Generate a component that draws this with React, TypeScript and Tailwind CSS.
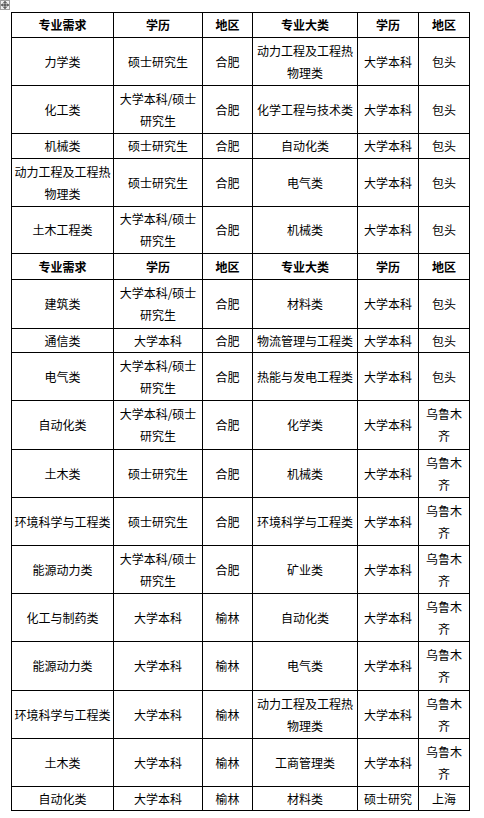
const header = ["专业需求", "学历", "地区", "专业大类", "学历", "地区"];

type Row = { h: number; cells: string[] };

const BS = "大学本科/硕士\n研究生";
const WLMQ = "乌鲁木\n齐";

const top: Row[] = [
  { h: 48, cells: ["力学类", "硕士研究生", "合肥", "动力工程及工程热\n物理类", "大学本科", "包头"] },
  { h: 48, cells: ["化工类", BS, "合肥", "化学工程与技术类", "大学本科", "包头"] },
  { h: 25, cells: ["机械类", "硕士研究生", "合肥", "自动化类", "大学本科", "包头"] },
  { h: 48, cells: ["动力工程及工程热\n物理类", "硕士研究生", "合肥", "电气类", "大学本科", "包头"] },
  { h: 47, cells: ["土木工程类", BS, "合肥", "机械类", "大学本科", "包头"] },
];

const bottom: Row[] = [
  { h: 49, cells: ["建筑类", BS, "合肥", "材料类", "大学本科", "包头"] },
  { h: 24, cells: ["通信类", "大学本科", "合肥", "物流管理与工程类", "大学本科", "包头"] },
  { h: 48, cells: ["电气类", BS, "合肥", "热能与发电工程类", "大学本科", "包头"] },
  { h: 49, cells: ["自动化类", BS, "合肥", "化学类", "大学本科", WLMQ] },
  { h: 48, cells: ["土木类", "硕士研究生", "合肥", "机械类", "大学本科", WLMQ] },
  { h: 48, cells: ["环境科学与工程类", "硕士研究生", "合肥", "环境科学与工程类", "大学本科", WLMQ] },
  { h: 48, cells: ["能源动力类", BS, "合肥", "矿业类", "大学本科", WLMQ] },
  { h: 48, cells: ["化工与制药类", "大学本科", "榆林", "自动化类", "大学本科", WLMQ] },
  { h: 49, cells: ["能源动力类", "大学本科", "榆林", "电气类", "大学本科", WLMQ] },
  { h: 48, cells: ["环境科学与工程类", "大学本科", "榆林", "动力工程及工程热\n物理类", "大学本科", WLMQ] },
  { h: 48, cells: ["土木类", "大学本科", "榆林", "工商管理类", "大学本科", WLMQ] },
  { h: 24, cells: ["自动化类", "大学本科", "榆林", "材料类", "硕士研究", "上海"] },
];

const widths = ["w-[102px]", "w-[89px]", "w-[50px]", "w-[105px]", "w-[61px]", "w-[51px]"];

function HeaderRow({ h }: { h: number }) {
  return (
    <tr style={{ height: h }}>
      {header.map((t, i) => (
        <td key={i} className="border border-black p-0 text-center align-middle font-bold">
          {t}
        </td>
      ))}
    </tr>
  );
}

function DataRow({ row }: { row: Row }) {
  return (
    <tr style={{ height: row.h }}>
      {row.cells.map((t, i) => (
        <td
          key={i}
          className="overflow-hidden border border-black p-0 text-center align-middle whitespace-pre-line"
        >
          {t}
        </td>
      ))}
    </tr>
  );
}

export default function App() {
  return (
    <div className="relative h-[818px] w-[484px] bg-white pl-[11px] pt-[12px] font-['Noto_Sans_CJK_SC',sans-serif] text-[12px] leading-[22px] text-black">
      {/* table move handle */}
      <div className="absolute left-0 top-0 flex h-[10px] w-[10px] items-center justify-center border border-[#a0a0a0] bg-[#f0f0f0]">
        <svg width="8" height="8" viewBox="0 0 8 8" fill="none" stroke="#333" strokeWidth="1">
          <path d="M4 0.5V7.5M0.5 4H7.5M2.5 2L4 0.5L5.5 2M2.5 6L4 7.5L5.5 6M2 2.5L0.5 4L2 5.5M6 2.5L7.5 4L6 5.5" />
        </svg>
      </div>
      <table className="w-[458px] table-fixed border-collapse">
        <colgroup>
          {widths.map((w, i) => (
            <col key={i} className={w} />
          ))}
        </colgroup>
        <tbody>
          <HeaderRow h={25} />
          {top.map((r, i) => (
            <DataRow key={"t" + i} row={r} />
          ))}
          <HeaderRow h={26} />
          {bottom.map((r, i) => (
            <DataRow key={"b" + i} row={r} />
          ))}
        </tbody>
      </table>
    </div>
  );
}
